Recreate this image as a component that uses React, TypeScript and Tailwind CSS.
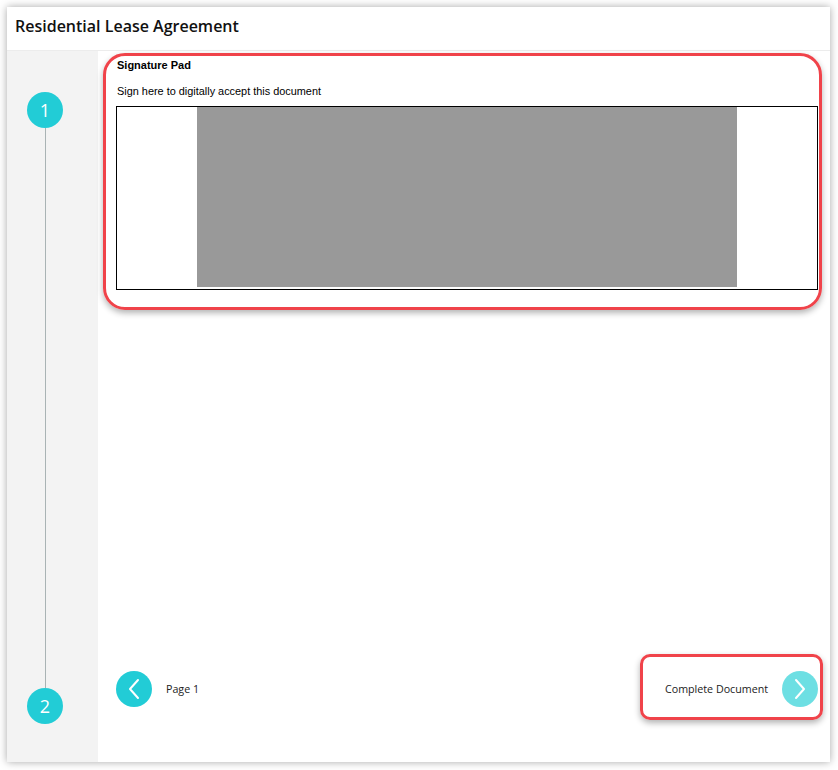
import React from "react";

const teal = "bg-[#22ccd6]";

function StepDot({ n }: { n: number }) {
  return (
    <div
      className={`flex h-9 w-9 shrink-0 items-center justify-center rounded-full ${teal} text-[18px] text-white`}
      style={{ fontFamily: '"Open Sans", sans-serif' }}
    >
      {n}
    </div>
  );
}

function Chevron({ dir }: { dir: "left" | "right" }) {
  return (
    <svg width="14" height="22" viewBox="0 0 14 22" fill="none">
      {dir === "left" ? (
        <path d="M11 2 L3 11 L11 20" stroke="white" strokeWidth="2" strokeLinecap="round" strokeLinejoin="round" />
      ) : (
        <path d="M3 2 L11 11 L3 20" stroke="white" strokeWidth="2" strokeLinecap="round" strokeLinejoin="round" />
      )}
    </svg>
  );
}

export default function App() {
  return (
    <div className="h-[770px] w-[838px] bg-white pl-[7px] pt-[7px]">
      <div className="flex h-[755px] w-[823px] flex-col bg-white shadow-[0_0_8px_rgba(0,0,0,0.35)]">
        <header className="flex h-[44px] shrink-0 items-center border-b border-[#ececec] pb-[6px] pl-[8px]">
          <h1
            className="text-[16px] font-semibold text-[#111]"
            style={{ fontFamily: '"Open Sans", sans-serif' }}
          >
            Residential Lease Agreement
          </h1>
        </header>

        <div className="flex flex-1">
          <aside className="flex w-[91px] flex-col items-start bg-[#f3f3f3] pb-[38px] pl-[20px] pt-[41px]">
            <StepDot n={1} />
            <div className="ml-[17.5px] w-px flex-1 bg-[#a9b3b4]" />
            <StepDot n={2} />
          </aside>

          <main className="flex flex-1 flex-col" style={{ fontFamily: '"Liberation Sans", Arial, sans-serif' }}>
            <section className="ml-[5px] mr-[8px] mt-[2px] rounded-[22px] border-[3px] border-[#f0434a] pb-[17px] pl-[10px] pr-[1px] pt-[2px] shadow-[0_3px_6px_rgba(0,0,0,0.3)]">
              <p className="pl-px text-[11px] font-bold leading-[14px] text-black">Signature Pad</p>
              <p className="mt-[12px] pl-px text-[10.9px] leading-[14px] text-black">
                Sign here to digitally accept this document
              </p>
              <div className="mt-[8px] flex h-[184px] justify-center border border-black bg-white">
                <div className="h-[180px] w-[540px] bg-[#999999]" />
              </div>
            </section>

            <div className="flex-1" />

            <nav
              className="mb-[42px] flex h-[66px] items-center justify-between pl-[18px] pr-[7px]"
              style={{ fontFamily: '"Open Sans", sans-serif' }}
            >
              <div className="mt-[4px] flex items-center gap-[14px]">
                <button className={`flex h-9 w-9 items-center justify-center rounded-full ${teal}`} type="button">
                  <Chevron dir="left" />
                </button>
                <span className="text-[10.7px] text-[#222]">Page 1</span>
              </div>

              <div className="flex h-[66px] w-[183px] items-center justify-end gap-[14px] rounded-[10px] border-[3px] border-[#f0434a] pr-[2px] pt-[4px] shadow-[0_3px_6px_rgba(0,0,0,0.3)]">
                <span className="text-[10.7px] text-[#222]">Complete Document</span>
                <button className="flex h-9 w-9 items-center justify-center rounded-full bg-[#6ddfe3]" type="button">
                  <Chevron dir="right" />
                </button>
              </div>
            </nav>
          </main>
        </div>
      </div>
    </div>
  );
}
